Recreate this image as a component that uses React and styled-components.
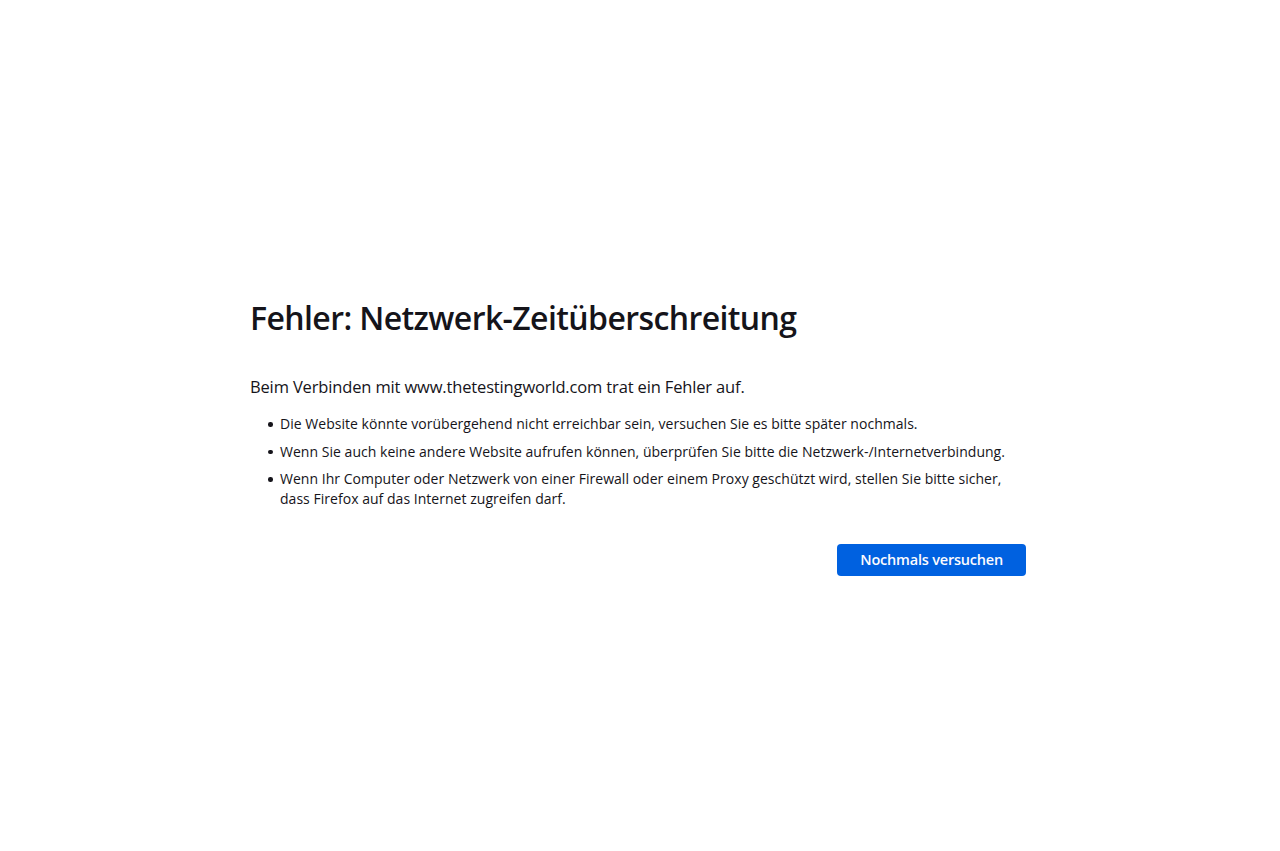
import React from "react";
import styled, { createGlobalStyle } from "styled-components";

const Global = createGlobalStyle`
  html, body { margin: 0; padding: 0; background: #fff; }
  body { font-family: "Open Sans", "Noto Sans", sans-serif; color: #15141a; }
`;

const Page = styled.main`
  min-height: 851px;
  display: flex;
  justify-content: center;
  padding-top: 296px;
  box-sizing: border-box;
`;

const Container = styled.div`
  width: 780px;
  display: flex;
  flex-direction: column;
`;

const Title = styled.h1`
  margin: 0 0 35px;
  font-size: 32px;
  font-weight: 600;
  line-height: 44px;
  letter-spacing: -0.6px;
`;

const Lead = styled.p`
  margin: 0 0 15px;
  font-size: 16.5px;
  line-height: 24px;
  letter-spacing: -0.15px;
`;

const List = styled.ul`
  margin: 0;
  padding: 0 0 0 30px;
  list-style: none;
  font-size: 14px;
  line-height: 20px;
  letter-spacing: 0.03px;
`;

const Item = styled.li`
  position: relative;
  margin-bottom: 7.5px;

  &::before {
    content: "";
    position: absolute;
    left: -12px;
    top: 8px;
    width: 4.5px;
    height: 4.5px;
    border-radius: 50%;
    background: currentColor;
  }
`;

const Actions = styled.div`
  display: flex;
  justify-content: flex-end;
  margin-top: 27px;
  padding-right: 4px;
`;

const Button = styled.button`
  height: 32px;
  padding: 0 23px;
  border: none;
  border-radius: 4px;
  background: #0061e0;
  color: #fbfbfe;
  font-family: inherit;
  font-size: 14.5px;
  font-weight: 600;
  letter-spacing: -0.2px;
  cursor: pointer;
`;

export default function App() {
  return (
    <>
      <Global />
      <Page>
        <Container>
          <Title>Fehler: Netzwerk-Zeitüberschreitung</Title>
          <Lead>Beim Verbinden mit www.thetestingworld.com trat ein Fehler auf.</Lead>
          <List>
            <Item>Die Website könnte vorübergehend nicht erreichbar sein, versuchen Sie es bitte später nochmals.</Item>
            <Item>Wenn Sie auch keine andere Website aufrufen können, überprüfen Sie bitte die Netzwerk-/Internetverbindung.</Item>
            <Item>Wenn Ihr Computer oder Netzwerk von einer Firewall oder einem Proxy geschützt wird, stellen Sie bitte sicher, dass Firefox auf das Internet zugreifen darf.</Item>
          </List>
          <Actions>
            <Button>Nochmals versuchen</Button>
          </Actions>
        </Container>
      </Page>
    </>
  );
}
